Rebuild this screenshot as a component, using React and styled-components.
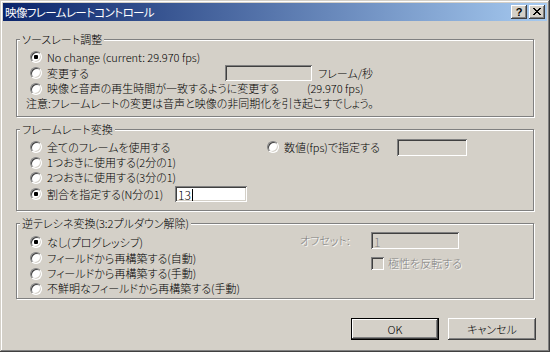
import React from 'react';
import styled, { createGlobalStyle } from 'styled-components';

const Global = createGlobalStyle`
  html, body { margin: 0; padding: 0; background: #d4d0c8; }
  body {
    font-family: "Noto Sans CJK JP", "Noto Sans", sans-serif;
    font-size: 11px;
    font-weight: 300;
    color: #000;
    font-feature-settings: "palt";
  }
  * { box-sizing: border-box; }
`;

const Window = styled.div`
  width: 550px;
  height: 352px;
  padding: 3px;
  background: #d4d0c8;
  box-shadow: inset -1px -1px 0 #404040, inset 1px 1px 0 #d4d0c8,
    inset -2px -2px 0 #808080, inset 2px 2px 0 #fff;
  display: flex;
  flex-direction: column;
`;

const TitleBar = styled.div`
  height: 18px;
  display: flex;
  align-items: center;
  padding-left: 2px;
  background: linear-gradient(to right, #0a246a, #a6caf0);
  color: #fff;
  line-height: 18px;
`;

const TitleText = styled.span`
  flex: 1;
  font-size: 11.5px;
  font-weight: 400;
  letter-spacing: -0.6px;
`;

const CapButtons = styled.div`
  display: flex;
  gap: 2px;
  margin-right: 2px;
`;

const CapButton = styled.div`
  width: 16px;
  height: 14px;
  background: #d4d0c8;
  box-shadow: inset -1px -1px 0 #404040, inset 1px 1px 0 #fff,
    inset -2px -2px 0 #808080;
  display: flex;
  align-items: center;
  justify-content: center;
  color: #000;
  font-family: "Liberation Sans", Arial, sans-serif;
  font-weight: bold;
  font-size: 11px;
  line-height: 14px;
  padding-bottom: 1px;
`;

const Content = styled.div`
  flex: 1;
  display: flex;
  flex-direction: column;
  padding: 18px 13px 0 13px;
`;

const Group = styled.div`
  position: relative;
  border: 1px solid #808080;
  box-shadow: inset 1px 1px 0 #fff, 1px 1px 0 #fff;
  padding: ${(p) => p.$pt}px 0 ${(p) => p.$pb}px 13px;
  margin-bottom: 12px;
  display: flex;
`;

const GroupLabel = styled.span`
  position: absolute;
  top: -9px;
  left: 3px;
  padding: 0 2px;
  background: #d4d0c8;
  line-height: 16px;
  white-space: nowrap;
`;

const Column = styled.div`
  display: flex;
  flex-direction: column;
  width: ${(p) => (p.$w ? `${p.$w}px` : 'auto')};
  flex: ${(p) => (p.$w ? 'none' : '1')};
`;

const Row = styled.div`
  display: flex;
  align-items: center;
  height: ${(p) => p.$h || 16}px;
  white-space: nowrap;
`;

const RadioItem = styled.label`
  display: flex;
  align-items: center;
  gap: 5px;
  width: ${(p) => (p.$w ? `${p.$w}px` : 'auto')};
  flex: none;
  line-height: 15px;
`;

const RadioDot = styled.span`
  position: relative;
  width: 12px;
  height: 12px;
  border-radius: 50%;
  background: #fff;
  border: 1px solid;
  border-color: #808080 #fff #fff #808080;
  box-shadow: inset 1px 1px 0 #404040, inset -1px -1px 0 #d4d0c8;
  flex: none;
  &::after {
    content: '';
    display: ${(p) => (p.$checked ? 'block' : 'none')};
    position: absolute;
    left: 3px;
    top: 3px;
    width: 4px;
    height: 4px;
    border-radius: 1px;
    background: #000;
  }
`;

const Text = styled.span`
  margin-left: ${(p) => p.$ml || 0}px;
  color: ${(p) => (p.$disabled ? '#808080' : '#000')};
  text-shadow: ${(p) => (p.$disabled ? '1px 1px 0 #fff' : 'none')};
  line-height: 15px;
  white-space: nowrap;
`;

const Edit = styled.div`
  width: ${(p) => p.$w}px;
  height: ${(p) => p.$h}px;
  margin-top: ${(p) => p.$mt || 0}px;
  background: ${(p) => (p.$white ? '#fff' : '#d4d0c8')};
  box-shadow: inset 1px 1px 0 #808080, inset -1px -1px 0 #fff,
    inset 2px 2px 0 #404040, inset -2px -2px 0 #d4d0c8;
  padding: 1px 3px 0 3px;
  display: flex;
  align-items: center;
  color: ${(p) => (p.$disabled ? '#808080' : '#000')};
  font-size: 12px;
  line-height: 13px;
  flex: none;
`;

const Caret = styled.span`
  display: inline-block;
  width: 1px;
  height: 12px;
  background: #000;
  margin-left: 1px;
`;

const SideGrid = styled.div`
  display: grid;
  grid-template-columns: 71px 88px;
  grid-template-rows: 17px 13px;
  row-gap: 8px;
  align-items: center;
  margin-top: -2px;
`;

const CheckItem = styled.label`
  grid-column: 2;
  display: flex;
  align-items: center;
  gap: 4px;
  white-space: nowrap;
`;

const CheckBox = styled.span`
  width: 13px;
  height: 13px;
  background: #d4d0c8;
  box-shadow: inset 1px 1px 0 #808080, inset -1px -1px 0 #fff,
    inset 2px 2px 0 #404040, inset -2px -2px 0 #d4d0c8;
  flex: none;
`;

const ButtonRow = styled.div`
  display: flex;
  justify-content: flex-end;
  gap: 9px;
  margin-top: 7px;
  margin-right: -2px;
`;

const Button = styled.button`
  width: 88px;
  height: 22px;
  font: inherit;
  color: #000;
  background: #d4d0c8;
  border: ${(p) => (p.$default ? '1px solid #000' : 'none')};
  box-shadow: inset -1px -1px 0 #404040, inset 1px 1px 0 #fff,
    inset -2px -2px 0 #808080, inset 2px 2px 0 #d4d0c8;
  padding: 0;
  line-height: 20px;
`;

function Radio({ checked, w, children }) {
  return (
    <RadioItem $w={w}>
      <RadioDot $checked={checked} />
      <span>{children}</span>
    </RadioItem>
  );
}

export default function App() {
  return (
    <>
      <Global />
      <Window>
        <TitleBar>
          <TitleText>映像フレームレートコントロール</TitleText>
          <CapButtons>
            <CapButton>?</CapButton>
            <CapButton>
              <svg width="8" height="7" viewBox="0 0 8 7" shapeRendering="crispEdges">
                <path
                  d="M0 0h2v1H0zM6 0h2v1H6zM1 1h2v1H1zM5 1h2v1H5zM2 2h4v1H2zM3 3h2v1H3zM2 4h4v1H2zM1 5h2v1H1zM5 5h2v1H5zM0 6h2v1H0zM6 6h2v1H6z"
                  fill="#000"
                />
              </svg>
            </CapButton>
          </CapButtons>
        </TitleBar>
        <Content>
          <Group $pt={9} $pb={5}>
            <GroupLabel>ソースレート調整</GroupLabel>
            <Column>
              <Row $h={16}>
                <Radio checked>No change (current: 29.970 fps)</Radio>
              </Row>
              <Row $h={16}>
                <Radio w={195}>変更する</Radio>
                <Edit $w={87} $h={16} $mt={-1} />
                <Text $ml={6}>フレーム/秒</Text>
              </Row>
              <Row $h={15}>
                <Radio w={277}>映像と音声の再生時間が一致するように変更する</Radio>
                <Text>(29.970 fps)</Text>
              </Row>
              <Row $h={15}>
                <Text $ml={-4}>注意:フレームレートの変更は音声と映像の非同期化を引き起こすでしょう。</Text>
              </Row>
            </Column>
          </Group>

          <Group $pt={9} $pb={7}>
            <GroupLabel>フレームレート変換</GroupLabel>
            <Column $w={237}>
              <Row $h={16}>
                <Radio>全てのフレームを使用する</Radio>
              </Row>
              <Row $h={15}>
                <Radio>1つおきに使用する(2分の1)</Radio>
              </Row>
              <Row $h={15}>
                <Radio>2つおきに使用する(3分の1)</Radio>
              </Row>
              <Row $h={18}>
                <Radio checked w={145}>割合を指定する(N分の1)</Radio>
                <Edit $w={72} $h={16} $white>
                  13<Caret />
                </Edit>
              </Row>
            </Column>
            <Column>
              <Row $h={16}>
                <Radio w={130}>数値(fps)で指定する</Radio>
                <Edit $w={70} $h={17} />
              </Row>
            </Column>
          </Group>

          <Group $pt={10} $pb={2}>
            <GroupLabel>逆テレシネ変換(3:2プルダウン解除)</GroupLabel>
            <Column $w={270}>
              <Row $h={16}>
                <Radio checked>なし(プログレッシブ)</Radio>
              </Row>
              <Row $h={16}>
                <Radio>フィールドから再構築する(自動)</Radio>
              </Row>
              <Row $h={15}>
                <Radio>フィールドから再構築する(手動)</Radio>
              </Row>
              <Row $h={15}>
                <Radio>不鮮明なフィールドから再構築する(手動)</Radio>
              </Row>
            </Column>
            <Column>
              <SideGrid>
                <Text $disabled>オフセット:</Text>
                <Edit $w={88} $h={17} $disabled>1</Edit>
                <CheckItem>
                  <CheckBox />
                  <Text $disabled>極性を反転する</Text>
                </CheckItem>
              </SideGrid>
            </Column>
          </Group>

          <ButtonRow>
            <Button $default>OK</Button>
            <Button>キャンセル</Button>
          </ButtonRow>
        </Content>
      </Window>
    </>
  );
}
